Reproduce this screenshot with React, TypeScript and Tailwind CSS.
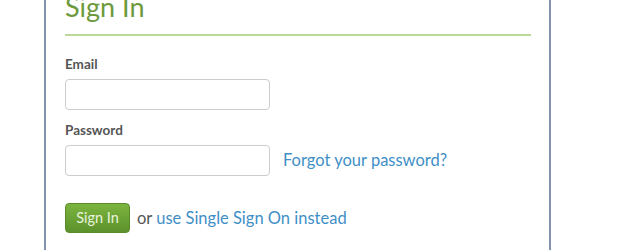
import React from 'react';

// Sign-in card, cropped at the top like the reference shot
const font = { fontFamily: 'Lato, "Open Sans", sans-serif' };

export default function App() {
  return (
    <div className="w-[620px] h-[250px] overflow-hidden bg-white" style={font}>
      <div className="ml-[44px] w-[507px] h-[300px] -mt-[2px] border-x-2 border-[#8393ab] pl-[19px] pr-[18px]">
        <h1 className="-mt-[10px] text-[27px] leading-[34px] text-[#6c9a3c] font-normal">Sign In</h1>
        <div className="mt-[10px] h-[2px] bg-[#bcd99a]" />

        <form className="mt-[20px] flex flex-col" onSubmit={(e) => e.preventDefault()}>
          <label className="text-[13.5px] leading-[16px] font-bold text-[#555]">Email</label>
          <input
            type="email"
            className="mt-[7px] w-[205px] h-[31px] rounded-[4px] border border-[#ccc] bg-white px-2 text-[14px] outline-none"
          />

          <label className="mt-[12px] text-[13.5px] leading-[16px] font-bold text-[#555]">Password</label>
          <div className="mt-[7px] flex items-center gap-[13px]">
            <input
              type="password"
              className="w-[205px] h-[31px] rounded-[4px] border border-[#ccc] bg-white px-2 text-[14px] outline-none"
            />
            <a href="#" className="text-[16.5px] text-[#3f8fc6]">Forgot your password?</a>
          </div>

          <div className="mt-[27px] flex items-center gap-[7px]">
            <button
              type="submit"
              className="w-[65px] h-[30px] rounded-[4px] border border-[#5b8a28] bg-gradient-to-b from-[#7cb43f] to-[#5c922c] text-[14.5px] text-[#e8f3dc]"
            >
              Sign In
            </button>
            <span className="text-[16.5px] text-[#555]">
              or <a href="#" className="text-[#3f8fc6]">use Single Sign On instead</a>
            </span>
          </div>
        </form>
      </div>
    </div>
  );
}
